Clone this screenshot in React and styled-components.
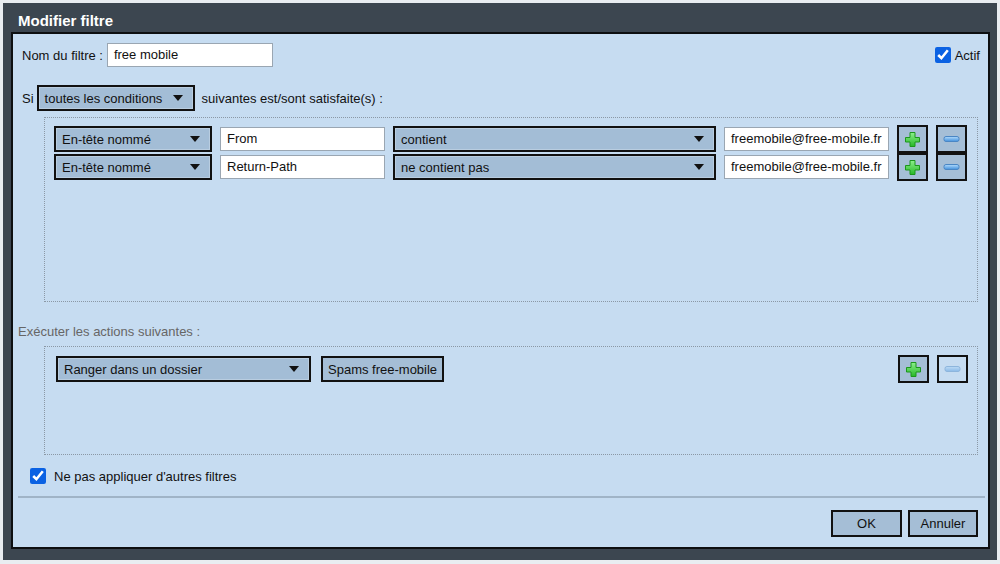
import React from "react";
import styled, { createGlobalStyle } from "styled-components";

const Global = createGlobalStyle`
  html, body { margin: 0; padding: 0; }
  body {
    background: #e9edf1;
    font-family: "Liberation Sans", Arial, sans-serif;
    font-size: 13px;
    color: #111;
    width: 1000px;
    height: 564px;
    overflow: hidden;
  }
`;

const Dialog = styled.div`
  position: relative;
  margin: 3px 0 0 3px;
  width: 994px;
  height: 557px;
  background: #3c4650;
  box-sizing: border-box;
  padding: 0 7px 11px 8px;
  display: flex;
  flex-direction: column;
`;

const TitleBar = styled.div`
  height: 29px;
  box-sizing: border-box;
  padding: 9px 0 0 7px;
  font-size: 15px;
  line-height: 17px;
  font-weight: bold;
  color: #fff;
`;

const Content = styled.div`
  flex: 1;
  background: #c6dcf1;
  border: 2px solid #0d0f11;
  display: flex;
  flex-direction: column;
`;

const Row = styled.div`
  display: flex;
  align-items: center;
  margin: ${p => p.$m || "0"};
  height: ${p => p.$h || 24}px;
`;

const Label = styled.span`
  white-space: nowrap;
  color: ${p => (p.$muted ? "#666" : "#111")};
  margin: ${p => p.$m || "0"};
`;

const TextField = styled.div`
  width: ${p => p.$w}px;
  flex-shrink: 0;
  height: 24px;
  box-sizing: border-box;
  background: #fff;
  border: 1px solid #9aa6b2;
  padding-left: 6px;
  line-height: 22px;
  margin: ${p => p.$m || "0"};
  white-space: nowrap;
  overflow: hidden;
`;

const Select = styled.div`
  width: ${p => p.$w}px;
  flex-shrink: 0;
  height: 26px;
  box-sizing: border-box;
  background: #a3bdd6;
  border: 2px solid #111;
  box-shadow: inset 0 0 0 1px #b9cde0;
  padding: 0 10px 0 6px;
  display: flex;
  align-items: center;
  justify-content: space-between;
  margin: ${p => p.$m || "0"};
  white-space: nowrap;
`;

const Arrow = styled.span`
  width: 0;
  height: 0;
  border-left: 5px solid transparent;
  border-right: 5px solid transparent;
  border-top: 6px solid #111;
`;

const Spacer = styled.div`
  flex: 1;
`;

const Checkbox = styled.input.attrs({ type: "checkbox" })`
  width: 16px;
  height: 16px;
  margin: ${p => p.$m || "0"};
  accent-color: #0b62e3;
`;

const Box = styled.div`
  border: 1px dotted #8b98a5;
  height: ${p => p.$h}px;
  box-sizing: border-box;
  margin: ${p => p.$m};
  padding: ${p => p.$p};
  display: flex;
  flex-direction: column;
`;

const CondRow = styled.div`
  display: flex;
  align-items: center;
  height: 28px;
  gap: 8px;
`;

const IconButton = styled.button`
  width: 31px;
  flex-shrink: 0;
  height: 28px;
  box-sizing: border-box;
  border: 2px solid #111;
  background: ${p => (p.$disabled ? "#c6dcf1" : "#a5bed6")};
  padding: 0;
  display: flex;
  align-items: center;
  justify-content: center;
  margin: ${p => p.$m || "0"};
  svg { opacity: ${p => (p.$disabled ? 0.45 : 1)}; }
`;

const TextButton = styled.button`
  height: ${p => p.$h || 27}px;
  min-width: ${p => p.$w || 0}px;
  box-sizing: border-box;
  border: 2px solid #111;
  background: #a5bed6;
  font-family: "Liberation Sans", Arial, sans-serif;
  font-size: 13px;
  color: #111;
  padding: 0 5px;
  margin: ${p => p.$m || "0"};
`;

const Separator = styled.div`
  height: 2px;
  background: #a0b4c7;
  margin: 12px 3px 0 5px;
`;

const PlusIcon = () => (
  <svg width="17" height="17" viewBox="0 0 17 17">
    <defs>
      <linearGradient id="pg" x1="0" y1="0" x2="0" y2="1">
        <stop offset="0" stopColor="#8cf08c" />
        <stop offset="1" stopColor="#27b827" />
      </linearGradient>
    </defs>
    <path
      d="M6 1.5h5v5h4.5v4.5h-4.5v4.5h-5v-4.5h-4.5v-4.5h4.5z"
      fill="url(#pg)"
      stroke="#1c961c"
      strokeWidth="1"
      strokeLinejoin="round"
    />
  </svg>
);

const MinusIcon = () => (
  <svg width="17" height="8" viewBox="0 0 17 8">
    <defs>
      <linearGradient id="mg" x1="0" y1="0" x2="0" y2="1">
        <stop offset="0" stopColor="#b4dcfc" />
        <stop offset="1" stopColor="#4290dc" />
      </linearGradient>
    </defs>
    <rect x="1" y="1.5" width="15" height="5" rx="2" fill="url(#mg)" stroke="#4a86c4" strokeWidth="1" />
  </svg>
);

const conditions = [
  { header: "From", op: "contient", value: "freemobile@free-mobile.fr" },
  { header: "Return-Path", op: "ne contient pas", value: "freemobile@free-mobile.fr" },
];

export default function App() {
  return (
    <>
      <Global />
      <Dialog>
        <TitleBar>Modifier filtre</TitleBar>
        <Content>
          <Row $m="9px 8px 0 9px">
            <Label>Nom du filtre :</Label>
            <TextField $w={166} $m="0 0 0 4px">free mobile</TextField>
            <Spacer />
            <Checkbox defaultChecked $m="0 4px 0 0" />
            <Label>Actif</Label>
          </Row>
          <Row $m="19px 0 0 9px">
            <Label>Si</Label>
            <Select $w={158} $m="0 0 0 3px">
              <span>toutes les conditions</span>
              <Arrow />
            </Select>
            <Label $m="0 0 0 7px">suivantes est/sont satisfaite(s) :</Label>
          </Row>
          <Box $h={185} $m="7px 10px 0 31px" $p="7px 10px 0 9px">
            {conditions.map((c, i) => (
              <CondRow key={i}>
                <Select $w={158}>
                  <span>En-tête nommé</span>
                  <Arrow />
                </Select>
                <TextField $w={165}>{c.header}</TextField>
                <Select $w={323}>
                  <span>{c.op}</span>
                  <Arrow />
                </Select>
                <TextField $w={165}>{c.value}</TextField>
                <IconButton aria-label="Ajouter">
                  <PlusIcon />
                </IconButton>
                <IconButton aria-label="Supprimer">
                  <MinusIcon />
                </IconButton>
              </CondRow>
            ))}
          </Box>
          <Row $h={14} $m="22px 0 0 5px">
            <Label $muted>Exécuter les actions suivantes :</Label>
          </Row>
          <Box $h={109} $m="8px 10px 0 31px" $p="8px 9px 0 11px">
            <CondRow>
              <Select $w={255}>
                <span>Ranger dans un dossier</span>
                <Arrow />
              </Select>
              <TextButton $h={26} $m="0 0 0 2px">Spams free-mobile</TextButton>
              <Spacer />
              <IconButton aria-label="Ajouter">
                <PlusIcon />
              </IconButton>
              <IconButton $disabled aria-label="Supprimer">
                <MinusIcon />
              </IconButton>
            </CondRow>
          </Box>
          <Row $h={16} $m="13px 0 0 17px">
            <Checkbox defaultChecked $m="0 8px 0 0" />
            <Label>Ne pas appliquer d'autres filtres</Label>
          </Row>
          <Separator />
          <Row $h={27} $m="12px 10px 0 0">
            <Spacer />
            <TextButton $w={71}>OK</TextButton>
            <TextButton $w={70} $m="0 0 0 6px">Annuler</TextButton>
          </Row>
        </Content>
      </Dialog>
    </>
  );
}
